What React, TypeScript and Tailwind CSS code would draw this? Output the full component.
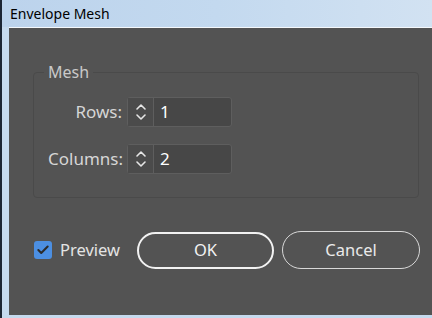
import { Check } from 'lucide-react';

function Spinner({ value }: { value: string }) {
  return (
    <div className="flex h-[30px] w-[105px] rounded-[3px] border border-[#5e5e5e] bg-[#474747]">
      <div className="flex w-[26px] flex-col items-center justify-center border-r border-[#5e5e5e] bg-[#4b4b4b]">
        <svg width="12" height="22" viewBox="0 0 12 22" fill="none" stroke="#e6e6e6" strokeWidth="1.6" strokeLinecap="round" strokeLinejoin="round">
          <path d="M2 8 L6 4 L10 8" />
          <path d="M2 14 L6 18 L10 14" />
        </svg>
      </div>
      <div className="flex items-center pl-[6px] text-[17px] text-white">{value}</div>
    </div>
  );
}

export default function App() {
  return (
    <div className="flex h-[318px] w-[432px] flex-col overflow-hidden border-l-2 border-[#1d2633] bg-[#c6daee] font-['Noto_Sans',sans-serif]">
      <div className="flex h-[27px] shrink-0 items-center bg-gradient-to-r from-[#bcd3ec] via-[#c3d9ef] to-[#d2e2f2] pl-[8px] text-[14px] text-black">
        Envelope Mesh
      </div>
      <div className="ml-[7px] mb-[3px] flex flex-1 flex-col border-t border-[#f4f8fc] bg-[#535353]">
        <fieldset className="ml-[24px] mr-[13px] mt-[35px] rounded-[4px] border border-[#4a4a4a] pb-[23px] pl-[14px] pt-[16px]">
          <legend className="-ml-[4px] px-[4px] text-[16px] leading-[18px] text-[#c9c9c9]">Mesh</legend>
          <div className="grid grid-cols-[74px_auto] items-center gap-x-[5px] gap-y-[17px]">
            <div className="text-right text-[17px] text-[#d6d6d6]">Rows:</div>
            <Spinner value="1" />
            <div className="text-right text-[17px] text-[#d6d6d6]">Columns:</div>
            <Spinner value="2" />
          </div>
        </fieldset>
        <div className="mt-[33px] flex items-center pl-[25px]">
          <div className="flex h-[18px] w-[18px] items-center justify-center rounded-[3px] bg-[#4c8fe2]">
            <Check className="h-[14px] w-[14px] text-[#2b2b2b]" strokeWidth={3.5} />
          </div>
          <span className="ml-[8px] text-[16.5px] text-[#e4e4e4]">Preview</span>
          <button className="ml-[17px] flex h-[37px] w-[137px] items-center justify-center rounded-full border-2 border-[#f2f2f2] text-[16.5px] text-[#f2f2f2]">
            OK
          </button>
          <button className="ml-[8px] flex h-[38px] w-[138px] items-center justify-center rounded-full border border-[#d8d8d8] text-[16.5px] text-[#eaeaea]">
            Cancel
          </button>
        </div>
      </div>
    </div>
  );
}
